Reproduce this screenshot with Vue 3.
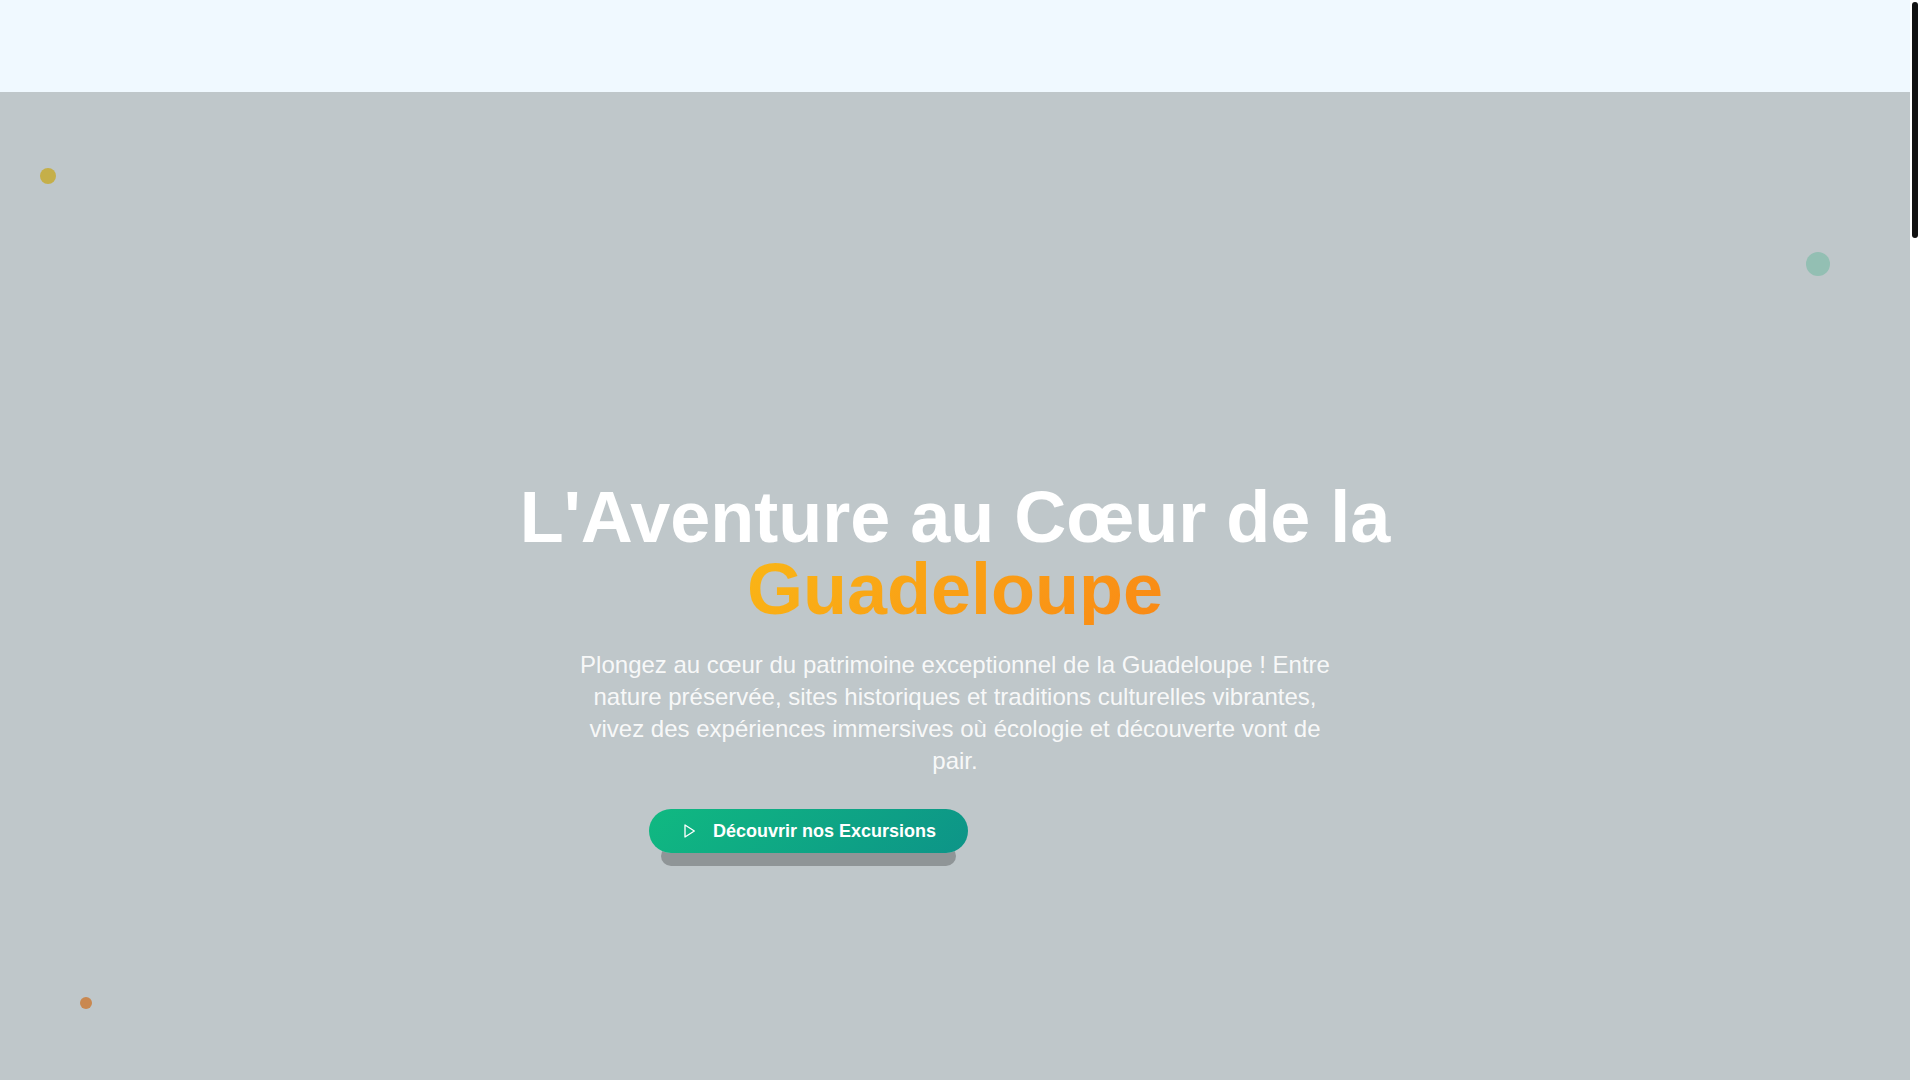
<script setup>
const title = "L'Aventure au Cœur de la"
const place = 'Guadeloupe'
const intro =
  'Plongez au cœur du patrimoine exceptionnel de la Guadeloupe ! Entre nature préservée, sites historiques et traditions culturelles vibrantes, vivez des expériences immersives où écologie et découverte vont de pair.'
</script>

<template>
  <div class="page">
    <div class="site">
      <header class="topbar"></header>
      <main class="hero">
        <span class="dot dot-yellow" aria-hidden="true"></span>
        <span class="dot dot-green" aria-hidden="true"></span>
        <span class="dot dot-orange" aria-hidden="true"></span>
        <div class="content">
          <h1>{{ title }} <span class="place">{{ place }}</span></h1>
          <p>{{ intro }}</p>
          <div class="actions">
            <button type="button" class="primary">
              <svg width="16" height="16" viewBox="0 0 24 24" fill="none" stroke="currentColor" stroke-width="2" stroke-linejoin="round" aria-hidden="true">
                <polygon points="6 3 20 12 6 21" />
              </svg>
              Découvrir nos Excursions
            </button>
            <span class="ghost" aria-hidden="true"></span>
          </div>
        </div>
      </main>
    </div>
    <div class="scroll" aria-hidden="true"><div class="thumb"></div></div>
  </div>
</template>

<style>
body {
  margin: 0;
  background: #ffffff;
}
</style>

<style scoped>
.page {
  display: flex;
  height: 100vh;
  overflow: hidden;
  font-family: "Liberation Sans", Arial, sans-serif;
}
.site {
  flex: 1;
  display: flex;
  flex-direction: column;
}
.topbar {
  height: 92px;
  flex-shrink: 0;
  background: #f0f9ff;
}
.hero {
  position: relative;
  flex: 1;
  box-sizing: border-box;
  display: flex;
  align-items: center;
  justify-content: center;
  padding: 162px 16px 0;
  background: #bfc7ca;
}
.dot {
  position: absolute;
  border-radius: 50%;
}
.dot-yellow {
  top: 76px;
  left: 40px;
  width: 16px;
  height: 16px;
  background: #c5af49;
}
.dot-green {
  top: 160px;
  right: 80px;
  width: 24px;
  height: 24px;
  background: #93bfb3;
}
.dot-orange {
  bottom: 71px;
  left: 80px;
  width: 12px;
  height: 12px;
  background: #c98850;
}
.content {
  width: 100%;
  max-width: 896px;
  text-align: center;
}
h1 {
  margin: 0 0 24px;
  font-size: 72px;
  line-height: 72px;
  font-weight: 700;
  color: #ffffff;
}
.place {
  display: block;
  background: linear-gradient(135deg, #facc15, #f97316);
  -webkit-background-clip: text;
  background-clip: text;
  color: transparent;
}
p {
  max-width: 768px;
  margin: 0 auto 32px;
  font-size: 24px;
  line-height: 32px;
  color: rgba(255, 255, 255, 0.9);
}
.actions {
  display: flex;
  justify-content: center;
  gap: 16px;
}
.primary {
  display: flex;
  align-items: center;
  gap: 16px;
  height: 44px;
  padding: 0 32px;
  border: 0;
  border-radius: 22px;
  background: linear-gradient(135deg, #10b981, #0d9488);
  box-shadow: 0 25px 0 -12px rgba(0, 0, 0, 0.25);
  color: #ffffff;
  font-family: inherit;
  font-size: 18px;
  font-weight: 700;
  white-space: nowrap;
}
.ghost {
  width: 277px;
  height: 44px;
}
.scroll {
  width: 10px;
  box-sizing: border-box;
  padding: 2px;
  background: #ffffff;
}
.thumb {
  height: 236px;
  border-radius: 3px;
  background: #111111;
}
</style>
